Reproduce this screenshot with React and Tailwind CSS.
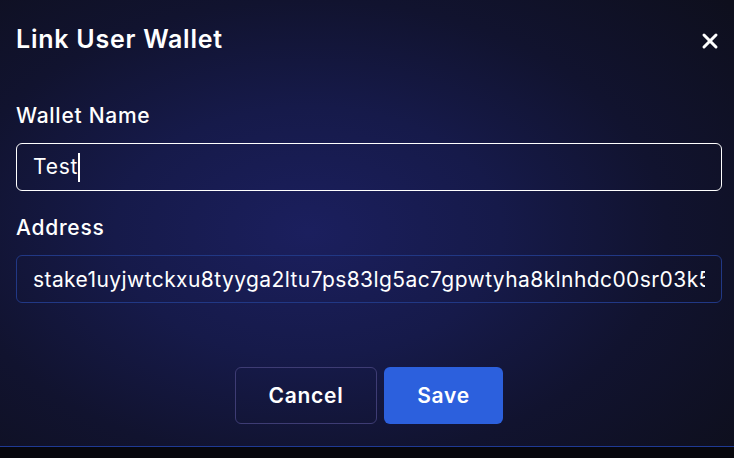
import { X } from "lucide-react";

export default function App() {
  const address = "stake1uyjwtckxu8tyyga2ltu7ps83lg5ac7gpwtyha8klnhdc00sr03k5qzx7f3mw9h";

  return (
    <div className="w-[734px] h-[458px] overflow-hidden bg-[#07070d] font-['Inter',sans-serif] text-white">
      {/* MODAL */}
      <div className="h-[447px] border-b border-[#1f3a94] bg-[radial-gradient(ellipse_75%_80%_at_42%_52%,#1b1f5e_0%,#161a4a_35%,#11132f_65%,#0e0f1d_100%)] pl-4 pr-3 pt-[23px] flex flex-col">
        {/* HEADER */}
        <div className="flex items-center justify-between">
          <h1 className="text-[25px] leading-8 font-semibold tracking-[0.03em]">Link User Wallet</h1>
          <button className="mt-[3px] text-white">
            <X size={24} strokeWidth={3} />
          </button>
        </div>

        {/* WALLET NAME */}
        <label className="mt-[47px] text-[21px] leading-7 font-medium tracking-[0.035em]">Wallet Name</label>
        <div className="mt-[13px] h-12 rounded-md border border-white px-4 flex items-center text-[21px] tracking-[0.035em]">
          <span>Test</span>
          <span className="w-[2px] h-[29px] bg-white" />
        </div>

        {/* ADDRESS */}
        <label className="mt-[23px] text-[21px] leading-7 font-medium tracking-[0.035em]">Address</label>
        <input
          readOnly
          value={address}
          className="mt-[13px] h-12 rounded-md border border-[#213885] bg-transparent px-4 text-[21px] tracking-[0.02em] text-white outline-none"
        />

        {/* ACTIONS */}
        <div className="mt-16 flex justify-center gap-[7px]">
          <button className="h-[57px] w-[142px] rounded-md border border-[#3e3c74] text-[21px] font-semibold tracking-[0.035em]">
            Cancel
          </button>
          <button className="h-[57px] w-[119px] rounded-md bg-[#2c60dd] text-[21px] font-semibold tracking-[0.035em]">
            Save
          </button>
        </div>
      </div>
    </div>
  );
}
